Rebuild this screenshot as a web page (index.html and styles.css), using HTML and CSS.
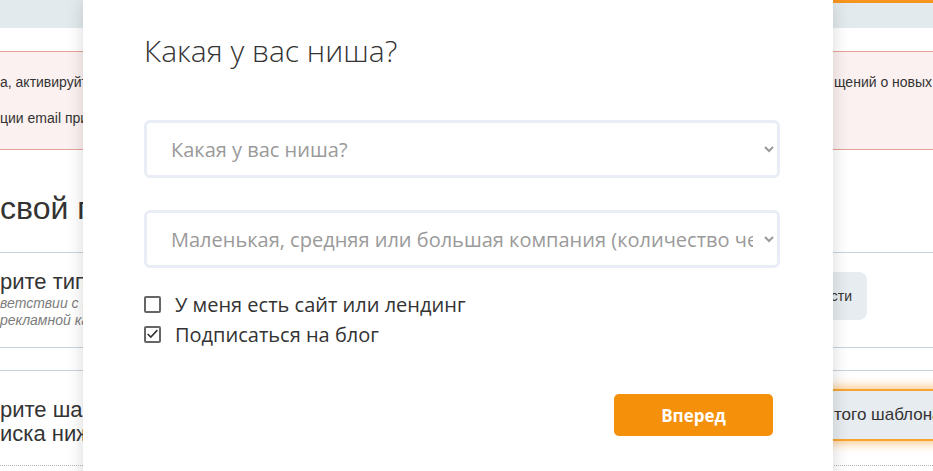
FILE: index.html
```html
<!DOCTYPE html>
<html lang="ru">
<head>
<meta charset="utf-8">
<title>Какая у вас ниша?</title>
<link rel="stylesheet" href="styles.css">
</head>
<body>
<div class="page">
  <div class="topbar"></div>
  <div class="alert">
    <div class="alert-line"><span class="alert-left">а, активируйте свой аккаунт, чтобы получать уведомления о новых сообщениях и</span><span class="alert-right">щений о новых</span></div>
    <div class="alert-line"><span class="alert-left">ции email привязанного к вашему аккаунту</span></div>
  </div>
  <h2 class="heading">свой проект</h2>
  <div class="section one">
    <div class="sec-text">
      <div class="sec-title">рите тип кампании</div>
      <div class="sec-note">ветствии с целями вашей</div>
      <div class="sec-note">рекламной кампании</div>
    </div>
    <div class="grey-btn">Подробности</div>
  </div>
  <div class="section collapsed"></div>
  <div class="section two">
    <div class="sec-text">
      <div class="sec-title tight">рите шаблон из</div>
      <div class="sec-title tight">иска ниже</div>
    </div>
    <div class="glow-box">того шаблона</div>
  </div>
</div>

<div class="modal">
  <h1 class="modal-title">Какая у вас ниша?</h1>
  <select class="field">
    <option>Какая у вас ниша?</option>
  </select>
  <select class="field second">
    <option>Маленькая, средняя или большая компания (количество человек)</option>
  </select>
  <div class="checks">
    <label class="check"><span class="box"></span><span>У меня есть сайт или лендинг</span></label>
    <label class="check"><span class="box"><svg viewBox="0 0 14 14" width="14" height="14"><polyline points="1.8,7 5.2,10.4 12.2,2.8" fill="none" stroke="#333" stroke-width="1.7"/></svg></span><span>Подписаться на блог</span></label>
  </div>
  <div class="actions">
    <button class="next">Вперед</button>
  </div>
</div>
</body>
</html>
```
FILE: styles.css
```css
html, body {
  margin: 0;
  padding: 0;
}
body {
  width: 933px;
  height: 471px;
  overflow: hidden;
  position: relative;
  background: #fff;
  font-family: "Liberation Sans", Arial, sans-serif;
  color: #333;
}
.page {
  width: 933px;
  overflow: hidden;
}
.topbar {
  height: 28px;
  background: linear-gradient(#f7941d, #f7941d) right top / 260px 3px no-repeat, #e3eaed;
}
.alert {
  margin-top: 23px;
  border-top: 1px solid #e6a298;
  border-bottom: 1px solid #e6a298;
  background: #fbf1f0;
  padding: 21px 0 22px;
  font-size: 14px;
  line-height: 18px;
}
.alert-line {
  display: flex;
  white-space: nowrap;
}
.alert-line + .alert-line {
  margin-top: 18px;
}
.alert-left {
  flex: none;
  width: 834px;
  overflow: hidden;
}
.alert-right {
  flex: none;
}
.heading {
  margin: 38px 0 0;
  font-weight: normal;
  font-size: 32px;
  line-height: 40px;
  white-space: nowrap;
}
.section {
  display: flex;
  justify-content: space-between;
  border-bottom: 1px solid #c9d3db;
  white-space: nowrap;
}
.section.one {
  margin-top: 24px;
  border-top: 1px solid #c9d3db;
  padding: 16px 0 17px;
  height: 61px;
}
.sec-title {
  font-size: 22px;
  line-height: 26px;
}
.sec-title.tight {
  line-height: 24px;
}
.sec-note {
  font-size: 14px;
  line-height: 17px;
  font-style: italic;
  color: #7d7d7d;
}
.grey-btn {
  align-self: flex-start;
  margin-top: 3px;
  margin-right: 66px;
  height: 48px;
  line-height: 48px;
  padding: 0 15px 0 18px;
  border-radius: 8px;
  background: #e7ecf0;
  font-size: 14px;
}
.section.collapsed {
  height: 22px;
}
.section.two {
  border-bottom: 1px dotted #b5b5b5;
  height: 94px;
}
.section.two .sec-text {
  padding-top: 27px;
}
.glow-box {
  align-self: flex-start;
  margin-top: 20px;
  margin-right: -20px;
  width: 119px;
  height: 48px;
  line-height: 48px;
  padding-left: 14px;
  overflow: hidden;
  background: #e7ecf0;
  font-size: 17px;
  box-shadow: 0 0 0 2px #f9a431, 0 0 10px 4px rgba(249, 150, 30, 0.55);
}

/* modal */
.modal {
  position: absolute;
  top: 0;
  left: 83px;
  width: 750px;
  height: 500px;
  box-sizing: border-box;
  padding: 31px 53px 0 61px;
  background: #fff;
  box-shadow: 0 0 16px rgba(0, 0, 0, 0.16);
  font-family: "Open Sans", sans-serif;
  color: #333;
}
.modal-title {
  margin: 0;
  font-weight: 300;
  font-size: 30px;
  line-height: 40px;
  color: #333;
}
.field {
  display: block;
  width: 636px;
  height: 58px;
  margin-top: 49px;
  box-sizing: border-box;
  border: 3px solid #e9edf5;
  border-radius: 6px;
  padding: 0 8px 0 20px;
  background: #fff;
  font-family: "Open Sans", sans-serif;
  font-size: 20px;
  color: #9a9a9a;
  outline: none;
}
.field.second {
  margin-top: 32px;
}
.checks {
  margin-top: 21px;
}
.check {
  display: flex;
  align-items: center;
  gap: 14px;
  height: 30px;
  font-size: 20px;
  color: #333;
}
.box {
  flex: none;
  width: 17px;
  height: 17px;
  box-sizing: border-box;
  border: 2px solid #666;
  border-radius: 2px;
  display: flex;
  align-items: center;
  justify-content: center;
  background: #fff;
}
.box svg {
  display: block;
}
.actions {
  display: flex;
  justify-content: flex-end;
  margin-top: 45px;
  padding-right: 7px;
}
.next {
  width: 159px;
  height: 42px;
  border: none;
  border-radius: 5px;
  background: #f5900b;
  color: #fff;
  font-family: "Open Sans", sans-serif;
  font-weight: 700;
  font-size: 17px;
  cursor: pointer;
}
```
